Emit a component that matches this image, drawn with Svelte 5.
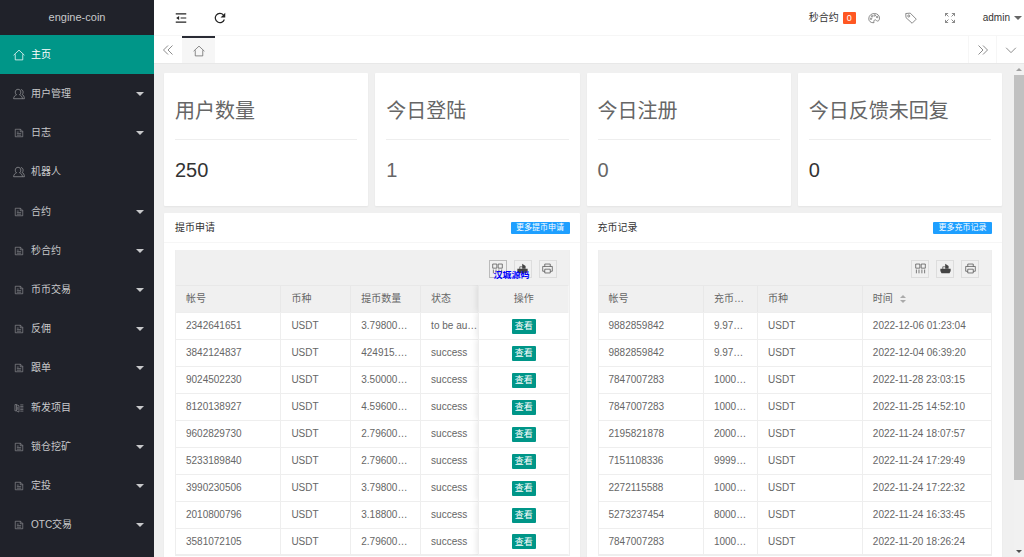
<script>
  const menu = [
    { label: '主页', icon: 'home', active: true },
    { label: '用户管理', icon: 'user', more: true },
    { label: '日志', icon: 'file', more: true },
    { label: '机器人', icon: 'user' },
    { label: '合约', icon: 'file', more: true },
    { label: '秒合约', icon: 'file', more: true },
    { label: '币币交易', icon: 'file', more: true },
    { label: '反佣', icon: 'file', more: true },
    { label: '跟单', icon: 'file', more: true },
    { label: '新发项目', icon: 'book', more: true },
    { label: '锁仓挖矿', icon: 'file', more: true },
    { label: '定投', icon: 'file', more: true },
    { label: 'OTC交易', icon: 'file', more: true }
  ];

  const stats = [
    { title: '用户数量', value: 250, strong: true },
    { title: '今日登陆', value: 1 },
    { title: '今日注册', value: 0 },
    { title: '今日反馈未回复', value: 0, strong: true }
  ];

  const withdrawals = [
    ['2342641651', '3.79800000', 'to be audited'],
    ['3842124837', '424915.0000', 'success'],
    ['9024502230', '3.50000000', 'success'],
    ['8120138927', '4.59600000', 'success'],
    ['9602829730', '2.79600000', 'success'],
    ['5233189840', '2.79600000', 'success'],
    ['3990230506', '3.79800000', 'success'],
    ['2010800796', '3.18800000', 'success'],
    ['3581072105', '2.79600000', 'success']
  ];

  const deposits = [
    ['9882859842', '9.97000', '2022-12-06 01:23:04'],
    ['9882859842', '9.97000', '2022-12-04 06:39:20'],
    ['7847007283', '1000000', '2022-11-28 23:03:15'],
    ['7847007283', '1000000', '2022-11-25 14:52:10'],
    ['2195821878', '2000000', '2022-11-24 18:07:57'],
    ['7151108336', '9999000', '2022-11-24 17:29:49'],
    ['2272115588', '1000000', '2022-11-24 17:22:32'],
    ['5273237454', '8000000', '2022-11-24 16:33:45'],
    ['7847007283', '1000000', '2022-11-20 18:26:24']
  ];
</script>

{#snippet icon(name)}
  <svg class="icon {name}" viewBox="0 0 16 16" aria-hidden="true">
    {#if name === 'home'}
      <path d="M.8 8.300 8 1.500l7.200 6.800M3 7v7.500h10V7" />
    {:else if name === 'user'}
      <path d="M6.700 1.700c2.300 0 3.700 1.700 3.700 3.900 0 1.500-.7 2.800-1.700 3.500 2.200.7 3.700 2.600 3.900 5.200H.8c.2-2.600 1.600-4.500 3.900-5.200C3.700 8.400 3 7.100 3 5.600c0-2.200 1.400-3.900 3.700-3.900ZM10.500 2c2 .3 3 1.700 3 3.600 0 1.300-.5 2.300-1.300 3 1.800.8 2.900 2.900 3 5.700h-2.600" />
    {:else if name === 'file'}
      <path d="M2 2h8.500L14 5.500V14H2ZM10 2v4h4M4.500 6.500h3M4.500 9h7M4.500 11.500h7" />
    {:else if name === 'book'}
      <path d="M1.500 2.500h2l4.500 2v10l-4.500-2h-2ZM4 2.500v10M6 6v5M10 3h5M10 5.500h5M10 8h5M10 10.500h5M10 13h5" />
    {:else if name === 'fold'}
      <path d="M1 2.500h14M7.500 8H15M1 13.500h14" /><path class="solid" d="m1.500 8 4-2.700v5.400Z" />
    {:else if name === 'refresh'}
      <path d="M13.800 10A6.200 6.200 0 1 1 12.500 3.800" /><path class="solid" d="M15 1v6.200H8.800Z" />
    {:else if name === 'palette'}
      <path d="M8 14.300C3.500 14.800.7 12 1 8.500 1.400 4.500 4.500 2 8.500 2c4 0 6.800 2.500 6.800 6 0 4.500-3 5-4.500 3-1.500-1.700-3.700.1-2.800 3.300Z" /><circle cx="4" cy="9" r="1" /><circle cx="5.500" cy="5.700" r="1" /><circle cx="9" cy="4.600" r="1" /><circle cx="12.200" cy="6.700" r="1" />
    {:else if name === 'tag'}
      <path d="M1 2 7 1.500l8 8-5.500 5.500L1.300 7.500Z" /><circle cx="5" cy="5.300" r="1.400" />
    {:else if name === 'full'}
      <path d="M2 5.500V2h3.500M2 2l4 4M10.500 2H14v3.500M14 2l-4 4M2 10.500V14h3.500M2 14l4-4M14 10.500V14h-3.500M14 14l-4-4" />
    {:else if name === 'left'}
      <path d="M8 2 2 8l6 6M14 2 8 8l6 6" />
    {:else if name === 'right'}
      <path d="m2 2 6 6-6 6M8 2l6 6-6 6" />
    {:else if name === 'down'}
      <path d="m1.500 5 6.500 6.500L14.500 5" />
    {:else if name === 'cols'}
      <path d="M1 1.500h6v6H1ZM9 1.500h6v6H9ZM2 9.500V15M5.800 9.500V15M10 9.500V15M14 9.500V15" />
    {:else if name === 'export'}
      <path class="solid" d="M.5 8.500h15v3.300L13.800 15H2.200L.5 11.800Z" /><path d="M4 9V5.500h4" /><path class="solid" d="M7.500 1 12.500 4.500v4h-5Z" />
    {:else if name === 'print'}
      <path d="M4 5V1.500h8V5M4 12H1V5h14v7h-3M4 9h8v5.500H4Z" />
    {/if}
  </svg>
{/snippet}

{#snippet tools(watermark)}
  <div class="tools">
    <button class:pressed={watermark} aria-label="筛选列">{@render icon('cols')}</button>
    <button aria-label="导出">{@render icon('export')}</button>
    <button aria-label="打印">{@render icon('print')}</button>
    {#if watermark}<span class="mark">汉城源码</span>{/if}
  </div>
{/snippet}

<div class="app">
  <aside>
    <div class="logo">engine-coin</div>
    <nav>
      {#each menu as item}
        <a href="#top" class:active={item.active}>
          {@render icon(item.icon)}
          <span>{item.label}</span>
          {#if item.more}<i class="caret"></i>{/if}
        </a>
      {/each}
    </nav>
  </aside>

  <div class="body">
    <header>
      <button class="dark" aria-label="侧边伸缩">{@render icon('fold')}</button>
      <button class="dark" aria-label="刷新">{@render icon('refresh')}</button>
      <a class="contract" href="#top">秒合约<b>0</b></a>
      <button class="theme" aria-label="主题">{@render icon('palette')}</button>
      <button aria-label="便签">{@render icon('tag')}</button>
      <button aria-label="全屏">{@render icon('full')}</button>
      <button class="admin">admin<i class="caret"></i></button>
    </header>

    <div class="tabs">
      <button aria-label="向左">{@render icon('left')}</button>
      <button class="current" aria-label="主页">{@render icon('home')}</button>
      <button class="end" aria-label="向右">{@render icon('right')}</button>
      <button class="last" aria-label="更多">{@render icon('down')}</button>
    </div>

    <div class="view">
      <main>
        <section class="stats">
          {#each stats as s}
            <article class="card stat">
              <h2>{s.title}</h2>
              <p class:strong={s.strong}>{s.value}</p>
            </article>
          {/each}
        </section>

        <section class="panels">
          <article class="card">
            <div class="head"><h3>提币申请</h3><button class="more">更多提币申请</button></div>
            <div class="grid">
              {@render tools(true)}
              <table>
                <colgroup><col style="width:26.600%" /><col style="width:17.800%" /><col style="width:17.800%" /><col style="width:14.800%" /><col style="width:23%" /></colgroup>
                <thead>
                  <tr><th>帐号</th><th>币种</th><th>提币数量</th><th>状态</th><th class="op">操作</th></tr>
                </thead>
                <tbody>
                  {#each withdrawals as [id, amount, state]}
                    <tr>
                      <td>{id}</td><td>USDT</td><td>{amount}</td><td class="state">{state}</td>
                      <td class="op"><button class="look">查看</button></td>
                    </tr>
                  {/each}
                </tbody>
              </table>
            </div>
          </article>

          <article class="card">
            <div class="head"><h3>充币记录</h3><button class="more">更多充币记录</button></div>
            <div class="grid">
              {@render tools(false)}
              <table>
                <colgroup><col style="width:26.600%" /><col style="width:13.800%" /><col style="width:26.700%" /><col style="width:32.900%" /></colgroup>
                <thead>
                  <tr><th>帐号</th><th>充币数量</th><th>币种</th><th>时间<span class="sort"><i></i><i></i></span></th></tr>
                </thead>
                <tbody>
                  {#each deposits as [id, amount, time]}
                    <tr><td>{id}</td><td>{amount}</td><td>USDT</td><td>{time}</td></tr>
                  {/each}
                </tbody>
              </table>
            </div>
          </article>
        </section>
      </main>

      <div class="scrollbar" aria-hidden="true">
        <i class="arrow up"></i>
        <div class="track"><div class="thumb"></div></div>
        <i class="arrow"></i>
      </div>
    </div>
  </div>
</div>

<style>
  :global(body) { margin: 0; overflow: hidden; }
  .app {
    display: flex;
    height: 100vh;
    overflow: hidden;
    font: 10px/16px "Liberation Sans", "Noto Sans CJK SC", sans-serif;
    color: #666;
    background: #f0f0f0;
  }
  .app :global(*) { box-sizing: border-box; }
  a { color: inherit; text-decoration: none; }
  button { font: inherit; color: inherit; background: none; border: 0; padding: 0; display: flex; align-items: center; justify-content: center; }
  h2, h3, p { margin: 0; font-weight: 400; }
  .icon { width: 12px; height: 12px; flex: none; fill: none; stroke: currentColor; stroke-width: 1; }
  .icon .solid { fill: currentColor; stroke: none; }
  .caret { border: 4px solid transparent; border-top-color: currentColor; border-bottom: 0; }

  aside { width: 154px; flex: none; display: flex; flex-direction: column; background: #20222a; color: #c8c9cb; }
  .logo { height: 35px; flex: none; font-size: 11px; line-height: 35px; text-align: center; }
  nav { flex: 1; display: grid; grid-auto-rows: 1fr; padding-bottom: 12px; }
  nav a { display: flex; align-items: center; gap: 6px; padding: 0 10px 0 13px; }
  nav span { flex: 1; }
  nav .icon { opacity: .7; }
  nav .file, nav .book { height: 10px; }
  nav .active { background: #009688; color: #fff; }
  nav .active .icon { opacity: 1; }

  .body { flex: 1; min-width: 0; display: flex; flex-direction: column; }
  header { height: 35px; flex: none; display: flex; align-items: center; background: #fff; padding: 0 2px 0 7px; }
  header button { width: 39px; height: 35px; }
  header .dark { color: #222; }
  .dark .icon { stroke-width: 1.6; }
  .contract { margin-left: auto; display: flex; align-items: center; gap: 4px; color: #333; }
  .contract b { width: 13px; line-height: 12px; font-weight: 400; font-size: 9px; text-align: center; background: #ff5722; color: #fff; border-radius: 1px; }
  header .theme { width: 36px; }
  header .admin { width: auto; margin-left: 13px; gap: 4px; color: #333; }
  .admin .caret { color: #666; }

  .tabs { height: 29px; flex: none; display: flex; background: #fff; border-top: 1px solid #f6f6f6; border-bottom: 1px solid #e8e8e8; }
  .tabs button { width: 28px; }
  .tabs .current { width: 33px; background: #f6f6f6; border-top: 2px solid #292b34; }
  .tabs .end { margin-left: auto; border-left: 1px solid #f6f6f6; }
  .tabs .last { border-left: 1px solid #f6f6f6; }

  .view { flex: 1; min-height: 0; display: flex; }
  main { flex: 1; min-width: 0; overflow: hidden; padding: 9px 12px 0 10px; }
  .card { background: #fff; border-radius: 1px; box-shadow: 0 1px 2px rgba(0, 0, 0, .05); min-width: 0; }
  .stats { display: grid; grid-template-columns: repeat(4, 1fr); gap: 7px; }
  .stat { padding: 23px 11px 21px; font-size: 20px; }
  .stat h2 { font-size: 20px; line-height: 30px; padding-bottom: 13px; border-bottom: 1px solid #eee; }
  .stat p { line-height: 30px; padding-top: 15px; }
  .stat .strong { color: #333; }
  .panels { display: grid; grid-template-columns: 1fr 1fr; gap: 7px; margin-top: 7px; }
  .head { height: 30px; display: flex; align-items: center; justify-content: space-between; padding: 0 10px 0 11px; border-bottom: 1px solid #f6f6f6; color: #333; }
  h3 { font-size: 10px; }
  .more { height: 12px; min-width: 59px; padding: 0 5px; font-size: 8px; background: #1e9fff; color: #fff; border-radius: 1px; }

  .grid { margin: 7px 10px 7px 11px; border: 1px solid #eee; border-top: 0; }
  .tools { position: relative; height: 35px; display: flex; align-items: center; justify-content: flex-end; gap: 7px; padding: 2px 12px 0 0; background: #f0f0f0; }
  .tools button { width: 18px; height: 18px; border: 1px solid #ddd; color: #444; }
  .tools .pressed { border-color: #bbb; }
  .tools .icon { width: 11px; height: 11px; }
  .mark { position: absolute; right: 39px; top: 21px; height: 8px; line-height: 8px; overflow: hidden; font-size: 9px; font-weight: 700; color: #00f; }
  table { width: 100%; table-layout: fixed; border-collapse: separate; border-spacing: 0; }
  th, td { height: 27px; padding: 0 10px; text-align: left; font-weight: 400; border: 0 solid #eee; border-width: 1px 0 0 1px; white-space: nowrap; overflow: hidden; text-overflow: ellipsis; }
  th:first-child, td:first-child { border-left: 0; }
  th { background: #f0f0f0; border-color: #e8e8e8; }
  tbody tr:last-child td { border-bottom-width: 1px; }
  .state { padding-right: 0; }
  .op { text-align: center; box-shadow: -1px 0 6px rgba(0, 0, 0, .1); clip-path: inset(0 0 0 -8px); }
  td.op { background: #fff; }
  .look { width: 24px; height: 15px; margin: 0 auto; font-size: 9px; background: #009688; color: #fff; border-radius: 1px; }
  .sort { display: inline-flex; flex-direction: column; gap: 2px; margin-left: 7px; vertical-align: middle; }
  .sort i { border: 3px solid transparent; border-top: 0; border-bottom-color: #aaa; }
  .sort i + i { border-top: 3px solid #aaa; border-bottom: 0; }

  .scrollbar { width: 10px; flex: none; display: flex; flex-direction: column; align-items: center; background: #f1f1f1; }
  .arrow { margin: 4px 0; border: 3px solid transparent; border-top-color: #505050; border-bottom: 0; }
  .arrow.up { border-top: 0; border-bottom: 3px solid #a0a0a0; }
  .track { flex: 1; width: 100%; }
  .thumb { height: 86%; background: #c1c1c1; }
</style>
